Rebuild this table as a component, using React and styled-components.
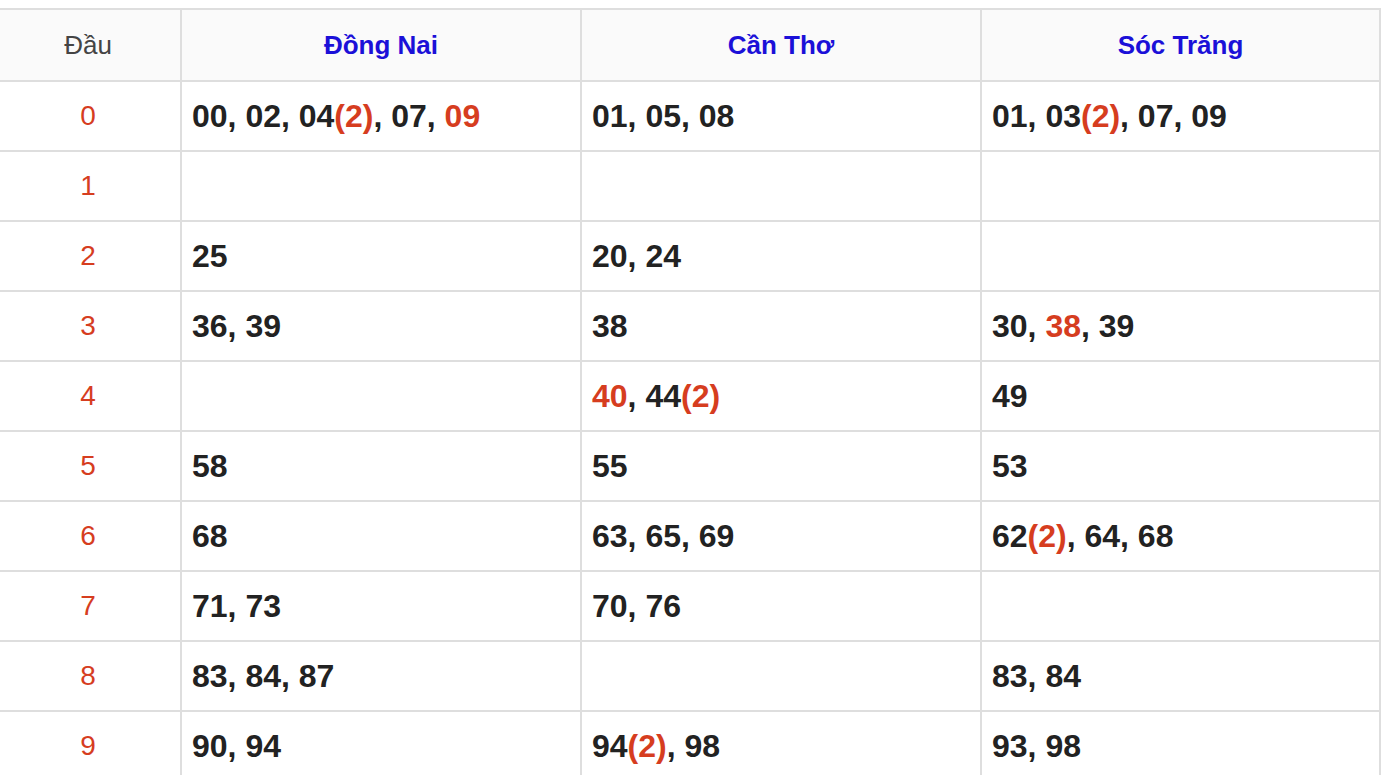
import React from "react";
import styled, { createGlobalStyle } from "styled-components";

const Global = createGlobalStyle`
  html, body { margin: 0; padding: 0; background: #fff; }
  body { font-family: "Liberation Sans", Arial, sans-serif; overflow: hidden; }
  *, *::before, *::after { box-sizing: border-box; }
`;

const Page = styled.div`
  padding-top: 8px;
  width: 1381px;
`;

const Table = styled.div`
  width: 1381px;
  border-top: 2px solid #dedede;
`;

const Row = styled.div`
  display: grid;
  grid-template-columns: 182px 400px 400px 399px;
  height: ${(p) => (p.$head ? "72px" : "70px")};
  background: ${(p) => (p.$head ? "#fafafa" : "#fff")};
`;

const Cell = styled.div`
  display: flex;
  align-items: center;
  border-right: 2px solid #dedede;
  border-bottom: 2px solid #dedede;
  min-width: 0;
`;

const HeadCell = styled(Cell)`
  justify-content: center;
  font-size: 26px;
  font-weight: ${(p) => (p.$province ? 700 : 400)};
  color: ${(p) => (p.$province ? "#1b10d8" : "#444")};
  padding-right: ${(p) => (p.$province ? "0" : "4px")};
`;

const LabelCell = styled(Cell)`
  justify-content: center;
  padding-right: 4px;
  font-size: 28px;
  color: #d63d1f;
`;

const DataCell = styled(Cell)`
  padding: 0 10px;
  font-size: 32px;
  font-weight: 700;
  color: #222;
  white-space: nowrap;
`;

const Hot = styled.span`
  color: #d63d1f;
`;

const data = [
  [
    [["00"], ["02"], ["04", 2], ["07"], ["09", 0, true]],
    [["01"], ["05"], ["08"]],
    [["01"], ["03", 2], ["07"], ["09"]],
  ],
  [[], [], []],
  [[["25"]], [["20"], ["24"]], []],
  [[["36"], ["39"]], [["38"]], [["30"], ["38", 0, true], ["39"]]],
  [[], [["40", 0, true], ["44", 2]], [["49"]]],
  [[["58"]], [["55"]], [["53"]]],
  [[["68"]], [["63"], ["65"], ["69"]], [["62", 2], ["64"], ["68"]]],
  [[["71"], ["73"]], [["70"], ["76"]], []],
  [[["83"], ["84"], ["87"]], [], [["83"], ["84"]]],
  [[["90"], ["94"]], [["94", 2], ["98"]], [["93"], ["98"]]],
];

function Numbers({ items }) {
  return (
    <span>
      {items.map(([n, count, hot], i) => (
        <React.Fragment key={i}>
          {i > 0 && ", "}
          {hot ? <Hot>{n}</Hot> : n}
          {count ? <Hot>({count})</Hot> : null}
        </React.Fragment>
      ))}
    </span>
  );
}

export default function App() {
  return (
    <Page>
      <Global />
      <Table>
        <Row $head>
          <HeadCell>Đầu</HeadCell>
          <HeadCell $province>Đồng Nai</HeadCell>
          <HeadCell $province>Cần Thơ</HeadCell>
          <HeadCell $province>Sóc Trăng</HeadCell>
        </Row>
        {data.map((row, r) => (
          <Row key={r}>
            <LabelCell>{r}</LabelCell>
            {row.map((items, c) => (
              <DataCell key={c}>
                <Numbers items={items} />
              </DataCell>
            ))}
          </Row>
        ))}
      </Table>
    </Page>
  );
}
